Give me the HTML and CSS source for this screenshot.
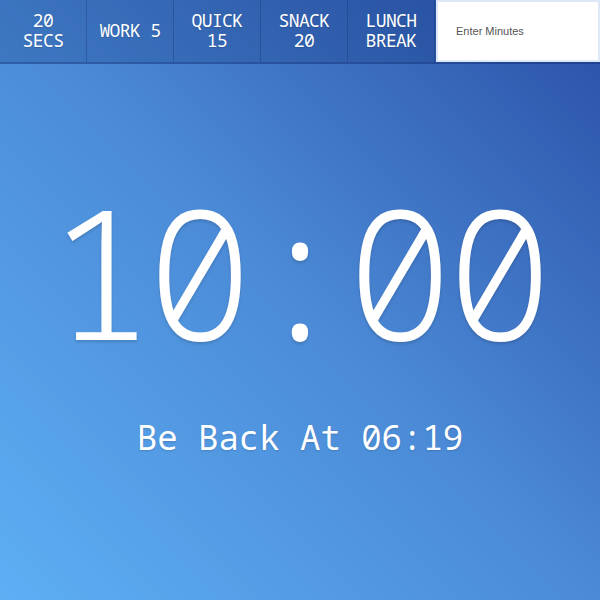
FILE: index.html
```html
<!DOCTYPE html>
<html>
<head>
<meta charset="utf-8">
<link rel="stylesheet" href="styles.css">
</head>
<body>
<div class="app">
  <nav class="bar">
    <button class="preset">20<br>SECS</button>
    <button class="preset">WORK 5</button>
    <button class="preset">QUICK<br>15</button>
    <button class="preset">SNACK<br>20</button>
    <button class="preset">LUNCH<br>BREAK</button>
    <div class="entry"><input class="minutes" type="text" placeholder="Enter Minutes"></div>
  </nav>
  <main class="display">
    <div class="time">10:00</div>
    <div class="back">Be Back At 06:19</div>
  </main>
</div>
</body>
</html>
```
FILE: styles.css
```css
* { box-sizing: border-box; }
html, body { margin: 0; height: 100%; }
body {
  font-family: "Noto Sans Mono", "DejaVu Sans Mono", monospace;
  font-feature-settings: "zero" 1;
  background: linear-gradient(45deg, #5dafF4 0%, #4b8ad6 50%, #2a4fa6 100%);
  color: #fff;
}
.app { display: flex; flex-direction: column; height: 600px; }
.bar {
  display: flex;
  height: 64px;
  background: rgba(10, 40, 110, 0.22);
  border-bottom: 2px solid rgba(20, 50, 120, 0.35);
}
.preset {
  flex: 0 0 87px;
  border: 0;
  border-right: 1px solid rgba(20, 50, 120, 0.35);
  background: transparent;
  color: #fff;
  font-family: "Noto Sans Mono", "DejaVu Sans Mono", monospace;
  font-feature-settings: "zero" 1;
  font-size: 18px;
  font-stretch: 85%;
  letter-spacing: -0.6px;
  line-height: 20px;
  padding: 0 0 2px;
  text-shadow: 0 1px 1px rgba(0,0,0,0.15);
}
.entry { flex: 1; display: flex; padding: 0 0 0 1px; }
.minutes {
  flex: 1;
  border: 2px solid #dde9f7;
  background: #fff;
  font-family: "Liberation Sans", "Open Sans", sans-serif;
  font-size: 11px;
  padding: 0 0 0 18px;
  outline: none;
}
.minutes::placeholder { color: #555; }
.display {
  flex: 1;
  display: flex;
  flex-direction: column;
  align-items: center;
}
.time {
  margin-top: 117px;
  font-size: 180px;
  line-height: 180px;
  font-weight: 350;
  letter-spacing: -8px;
  padding-right: 8px;
  text-shadow: 0 2px 3px rgba(0,0,0,0.15);
}
.back {
  margin-top: 56px;
  font-size: 34px;
  line-height: 40px;
  text-shadow: 0 1px 2px rgba(0,0,0,0.15);
}
```
